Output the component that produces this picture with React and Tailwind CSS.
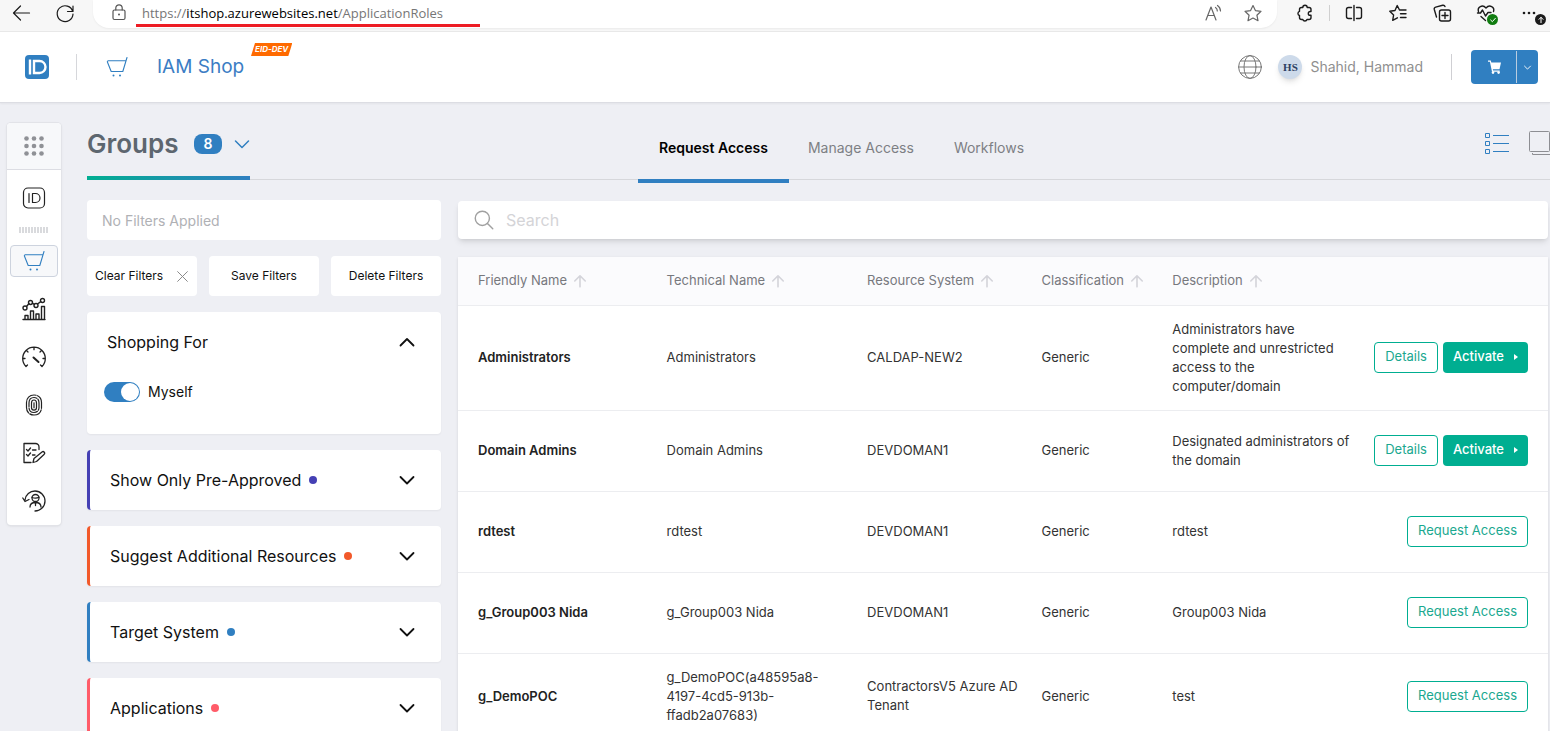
import React from 'react';

const FILTERS = [
  { title: 'Show Only Pre-Approved', border: 'border-[#4540b4]', dot: 'bg-[#4540b4]' },
  { title: 'Suggest Additional Resources', border: 'border-[#f2592a]', dot: 'bg-[#f2592a]' },
  { title: 'Target System', border: 'border-[#307fc1]', dot: 'bg-[#307fc1]' },
  { title: 'Applications', border: 'border-[#ff5c69]', dot: 'bg-[#ff5c69]' },
];

const COLUMNS = [
  { label: 'Friendly Name', width: 'w-[17.3%]' },
  { label: 'Technical Name', width: 'w-[18.4%]' },
  { label: 'Resource System', width: 'w-[16%]' },
  { label: 'Classification', width: 'w-[12%]' },
  { label: 'Description', width: 'w-[18.6%]' },
];

const ROWS = [
  {
    name: 'Administrators',
    technical: 'Administrators',
    system: 'CALDAP-NEW2',
    classification: 'Generic',
    description: 'Administrators have complete and unrestricted access to the computer/domain',
    active: true,
  },
  {
    name: 'Domain Admins',
    technical: 'Domain Admins',
    system: 'DEVDOMAN1',
    classification: 'Generic',
    description: 'Designated administrators of the domain',
    active: true,
  },
  { name: 'rdtest', technical: 'rdtest', system: 'DEVDOMAN1', classification: 'Generic', description: 'rdtest' },
  {
    name: 'g_Group003 Nida',
    technical: 'g_Group003 Nida',
    system: 'DEVDOMAN1',
    classification: 'Generic',
    description: 'Group003 Nida',
  },
  {
    name: 'g_DemoPOC',
    technical: 'g_DemoPOC(a48595a8-4197-4cd5-913b-ffadb2a07683)',
    system: 'ContractorsV5 Azure AD Tenant',
    classification: 'Generic',
    description: 'test',
  },
];

function Svg({ size = 24, className = '', sw = 1.2, children }) {
  return (
    <svg
      width={size}
      height={size}
      viewBox="0 0 24 24"
      fill="none"
      stroke="currentColor"
      strokeWidth={sw}
      strokeLinecap="round"
      strokeLinejoin="round"
      className={`shrink-0 ${className}`}
      aria-hidden="true"
    >
      {children}
    </svg>
  );
}

function Chevron({ className = '', up = false, size = 24, sw = 1.8 }) {
  return (
    <Svg size={size} sw={sw} className={className}>
      <path d={up ? 'M5.5 15.5 12 9l6.5 6.5' : 'M5.5 9 12 15.5 18.5 9'} />
    </Svg>
  );
}

function CartOutline({ className = '' }) {
  return (
    <Svg className={className} sw={1.1}>
      <path d="M22 2.5 17.8 16.5H6.2L2.300 6.800 3 5.800h17.800M22 2.500" />
      <circle cx="8.500" cy="20.500" r="1" fill="currentColor" stroke="none" />
      <circle cx="15" cy="20.500" r="1" fill="currentColor" stroke="none" />
    </Svg>
  );
}

function BrowserBar() {
  return (
    <div className="flex h-8 shrink-0 items-start overflow-hidden border-b border-[#e8e8e8] bg-[#f7f7f7] text-[#1b1b1b]">
      <div className="flex h-[26px] w-[93px] shrink-0 items-center gap-5 pl-[9px]">
        <button type="button" aria-label="Back">
          <Svg>
            <path d="M20.500 12h-16M11.500 5l-7 7 7 7" />
          </Svg>
        </button>
        <button type="button" aria-label="Refresh">
          <Svg>
            <path d="M19.700 10.500A7.900 7.900 0 1 0 20 13M20 5v5.500h-5.500" />
          </Svg>
        </button>
      </div>
      <div className="flex h-7 min-w-0 flex-1 items-start rounded-b-2xl bg-white pl-3.5 pr-3 shadow-xs">
        <Svg className="mt-px text-[#555]">
          <rect x="6" y="9" width="12" height="9.500" rx="1.500" />
          <path d="M8.800 9V7a3.200 3.200 0 0 1 6.400 0v2" />
          <circle cx="12" cy="13.500" r="1" fill="currentColor" stroke="none" />
        </Svg>
        <div
          role="textbox"
          aria-label="Address"
          className="ml-[5px] h-[27px] w-[344px] whitespace-nowrap border-b-3 border-[#ed1c24] pl-1.5 pt-[3px] font-['Open_Sans',sans-serif] text-[13px] leading-5 text-[#767676]"
        >
          https://<span className="text-black">itshop.azurewebsites.net</span>/ApplicationRoles
        </div>
        <button type="button" aria-label="Read aloud" className="ml-auto mt-px text-[#666]">
          <Svg>
            <path d="m5 19 5-13 5 13M6.800 14.500h6.400M14.500 6.500a4 4 0 0 1 1.800 3.500M16.500 4.500A7 7 0 0 1 19.500 10" />
          </Svg>
        </button>
        <button type="button" aria-label="Add to favorites" className="ml-4 mt-px text-[#666]">
          <Svg>
            <path d="m12 4.500 2.400 5.100 5.600.7-4.100 3.900 1.100 5.500-5-2.700-5 2.700 1.100-5.500L4 10.300l5.600-.7z" />
          </Svg>
        </button>
      </div>
      <div className="flex h-[26px] shrink-0 items-center pl-4 pr-2">
        <button type="button" aria-label="Extensions">
          <Svg sw={1.4}>
            <path d="M8.500 6.500h1.300a2.200 2.200 0 0 1 4.400 0H16a2 2 0 0 1 2 2v2h-.8a1.900 1.900 0 0 0 0 3.800h.8v2.200a2 2 0 0 1-2 2h-2a2.200 2.200 0 0 1-4.200 0H8.500a2 2 0 0 1-2-2v-2a2.200 2.200 0 0 1 0-4.200v-1.800a2 2 0 0 1 2-2z" />
          </Svg>
        </button>
        <span className="ml-3 h-4 w-px bg-[#d0d0d0]" />
        <button type="button" aria-label="Split screen" className="ml-3">
          <Svg sw={1.4}>
            <path d="M9.500 6.500h-3a2 2 0 0 0-2 2v7a2 2 0 0 0 2 2h3M14.500 6.500h3a2 2 0 0 1 2 2v7a2 2 0 0 1-2 2h-3M12 4.500v15" />
          </Svg>
        </button>
        <button type="button" aria-label="Favorites" className="ml-5">
          <Svg sw={1.4}>
            <path d="m13.500 9-2.300-4.500L9 9.500l-5.200.8 3.800 3.700-.9 5.300 4.700-2.500M13.500 9H20M14.500 12.800H20M14.500 16.500H20" />
          </Svg>
        </button>
        <button type="button" aria-label="Collections" className="ml-5">
          <Svg sw={1.4}>
            <rect x="9.500" y="9" width="11" height="11" rx="2" />
            <path d="M15 11.500v6M12 14.500h6M6.500 16 4.300 8.500a2 2 0 0 1 1.400-2.400l7-1.800a2 2 0 0 1 2.300 1.300" />
          </Svg>
        </button>
        <button type="button" aria-label="Browser essentials" className="relative ml-5">
          <Svg sw={1.4}>
            <path d="M4.500 10.500C3 6 8.500 3 12 7c3.500-4 9-1 7.500 3.500M3.500 12h3l2-3 3 6 2.500-3.500h3M7 15.500l4.500 4" />
          </Svg>
          <span className="absolute bottom-0 right-0 flex size-[11px] items-center justify-center rounded-full bg-[#107c10] text-white">
            <Svg size={8} sw={3}>
              <path d="m5 12 5 5 9-10" />
            </Svg>
          </span>
        </button>
        <button type="button" aria-label="Settings and more" className="relative ml-5">
          <Svg>
            <g fill="currentColor" stroke="none">
              <circle cx="6" cy="12" r="1.300" />
              <circle cx="11" cy="12" r="1.300" />
              <circle cx="16" cy="12" r="1.300" />
            </g>
          </Svg>
          <span className="absolute -right-1 bottom-0 flex size-[11px] items-center justify-center rounded-full bg-[#1b1b1b] text-white">
            <Svg size={8} sw={3}>
              <path d="M12 20V4M6 10l6-6 6 6" />
            </Svg>
          </span>
        </button>
      </div>
    </div>
  );
}

function Header() {
  return (
    <header className="flex h-[71px] shrink-0 items-center border-b border-[#dcdde3] bg-white pl-[25px] pr-3 shadow-xs">
      <a href="#home" aria-label="Home">
        <svg width="24" height="24" viewBox="0 0 24 24" fill="none" stroke="#fff" strokeWidth="2.400">
          <rect width="24" height="24" rx="4" fill="#307fc1" stroke="none" />
          <path d="M5 4.500v15M9 6h5.500a6 6 0 0 1 0 12H9z" />
        </svg>
      </a>
      <span className="ml-[27px] h-[26px] w-px bg-[#d6d7db]" />
      <CartOutline className="ml-7 text-[#307fc1]" />
      <div className="relative ml-7">
        <h1 className="text-[19px] leading-6 text-[#3b7dc4]">IAM Shop</h1>
        <span className="absolute -top-3 left-[94px] whitespace-nowrap bg-[#ff6a00] px-1 text-[8px] font-bold italic leading-[13px] text-white [clip-path:polygon(4px_0,100%_0,calc(100%-4px)_100%,0_100%)]">
          EID-DEV
        </span>
      </div>
      <button type="button" aria-label="Language" className="ml-auto text-[#777]">
        <Svg sw={1}>
          <circle cx="12" cy="12" r="11.400" />
          <ellipse cx="12" cy="12" rx="6" ry="11.400" />
          <path d="M.6 12h22.800M2.500 6h19M2.500 18h19" />
        </Svg>
      </button>
      <span className="ml-4 flex size-6 items-center justify-center rounded-full bg-[#cddaea] font-['Liberation_Serif',serif] text-[11px] font-bold text-[#2c3f63] shadow-md">
        HS
      </span>
      <span className="ml-2 text-sm text-[#8f8f8f]">Shahid, Hammad</span>
      <span className="ml-7 h-[26px] w-px bg-[#cfcfd3]" />
      <div className="ml-[19px] flex h-[34px] overflow-hidden rounded bg-[#307fc1] py-px text-white">
        <button type="button" aria-label="Cart" className="flex w-[45px] items-center justify-center pl-0.5">
          <svg width="16" height="16" viewBox="0 0 16 16" fill="currentColor" aria-hidden="true">
            <path d="M1 1.500h2.800l.5 2H14l-1.500 6.700H5.800l.3 1.300h6.600v1.200H5L2.900 2.800H1z" />
            <circle cx="6" cy="13.600" r="1.300" />
            <circle cx="11.600" cy="13.600" r="1.300" />
          </svg>
        </button>
        <button
          type="button"
          aria-label="Cart options"
          className="flex w-[22px] items-center justify-center border-l border-[#b9cde0]"
        >
          <Chevron size={11} sw={2} />
        </button>
      </div>
    </header>
  );
}

function Sidebar() {
  return (
    <nav
      aria-label="Modules"
      className="mx-[7px] mt-5 flex w-[54px] shrink-0 flex-col items-center self-start rounded bg-white pb-3 text-[#222] shadow-sm ring-1 ring-[#e2e3e8]"
    >
      <button
        type="button"
        aria-label="All apps"
        className="flex h-[47px] w-full items-center justify-center rounded-t border-b border-[#dcdde3] bg-[#f7f8fa] text-[#8f9196]"
      >
        <Svg>
          <g fill="currentColor" stroke="none">
            {[4.5, 12, 19.5].map((y) =>
              [4.5, 12, 19.5].map((x) => <circle key={`${x}-${y}`} cx={x} cy={y} r="2.300" />)
            )}
          </g>
        </Svg>
      </button>
      <button type="button" aria-label="Identity" className="mt-4">
        <Svg>
          <rect x="1.500" y="2" width="21" height="20" rx="4.500" />
          <path d="M7 7.500v9M10.500 7.500h3a4.500 4.500 0 0 1 0 9h-3z" />
        </Svg>
      </button>
      <span className="mt-[17px] h-1.5 w-[30px] bg-[repeating-linear-gradient(90deg,#d9dadd_0_2px,transparent_2px_3px)]" />
      <button
        type="button"
        aria-label="Shop"
        className="mt-3 flex h-8 w-12 items-center justify-center rounded-sm border border-[#cdd3de] bg-[#f7f8fa] text-[#307fc1]"
      >
        <CartOutline />
      </button>
      <button type="button" aria-label="Analytics" className="mt-5">
        <Svg sw={1.4}>
          <path d="M1 22.500h22M3 22v-3.500h3V22M8.500 22v-8h3v8M14 22v-5h3v5M19.500 22V9.500h3V22M4.500 9.500l2.500-3M10.300 6.200l2.200 1.300M15.800 6.800l3-2.200" />
          <circle cx="3" cy="11" r="2" />
          <circle cx="8.500" cy="5.500" r="2" />
          <circle cx="14" cy="8.500" r="2" />
          <circle cx="20.500" cy="3.500" r="2" />
        </Svg>
      </button>
      <button type="button" aria-label="Dashboard" className="mt-6">
        <Svg sw={1.3}>
          <path d="M4 21.500a11.300 11.300 0 1 1 16 0M4 21.500l1.500-1.500M20 21.500 18.500 20M.8 13.500H3M21 13.500h2.200M12 2.200v2.500M4.500 5.500 6 7M19.500 5.500 18 7" />
          <path d="m11.500 12.500 5 4.500" strokeWidth="2" />
        </Svg>
      </button>
      <button type="button" aria-label="Biometrics" className="mt-6">
        <Svg sw={1.2}>
          <path d="M4.500 9.500C4.500 5 7.500 2 12 2s7.500 3 7.500 7.500v5c0 4.500-3 7.500-7.500 7.500s-7.500-3-7.500-7.500z" strokeDasharray="14 1.500" />
          <path d="M7 10c0-3.500 2-5.500 5-5.500s5 2 5 5.500v4.500c0 3-2 5-5 5s-5-2-5-5z" strokeDasharray="11 1.500" />
          <path d="M9.500 10c0-2 1-3 2.500-3s2.500 1 2.500 3v4.500c0 1.700-1 2.700-2.500 2.700s-2.500-1-2.500-2.700z" />
          <path d="M12 9.800v5" />
        </Svg>
      </button>
      <button type="button" aria-label="Reviews" className="mt-6">
        <Svg sw={1.3}>
          <path d="M9 21.500H2V2.500h11.500a3.500 3.500 0 0 1 3.500 3.500v2.500M4.500 8.500 6 10l2.500-3M4.500 13.500 6 15l2.500-3M10.500 9H14M10.500 14h2.500M11 21.500l1-4 8-6.500a1.600 1.600 0 0 1 2 2.500l-7.500 7z" />
        </Svg>
      </button>
      <button type="button" aria-label="Delegation" className="mt-6">
        <Svg sw={1.3}>
          <path d="M3 11C3.500 5.500 8 2 13 2a10 10 0 1 1 0 20M.8 9 3 12.500 7 10.500" />
          <circle cx="13.500" cy="9" r="3.500" />
          <path d="M10 8.500c2.500.8 5 .8 7-.3M8 18c0-3 2-4.500 5.500-4.500S19 15 19 18M13.500 14v2.500" />
        </Svg>
      </button>
    </nav>
  );
}

function PageTabs() {
  return (
    <div className="flex h-[77px] shrink-0 border-b border-[#d6d7db]">
      <div className="w-[551px] shrink-0">
        <div className="flex h-[77px] w-[163px] items-center border-b-4 pt-2 [border-image:linear-gradient(90deg,#00ae91,#307fc1)_1]">
          <h2 className="text-[26px] font-semibold leading-8 text-[#5d666f]">Groups</h2>
          <span className="ml-auto flex h-5 w-7 items-center justify-center rounded-lg bg-[#307fc1] text-sm font-semibold text-white">
            8
          </span>
          <button type="button" aria-label="Switch resource type" className="-mr-1 ml-2 text-[#307fc1]">
            <Chevron sw={1.5} />
          </button>
        </div>
      </div>
      <div role="tablist" className="-mb-1 flex text-sm text-[#7d7f84]">
        <button
          type="button"
          role="tab"
          aria-selected="true"
          className="border-b-4 border-[#307fc1] px-[21px] pt-3.5 font-semibold text-black"
        >
          Request Access
        </button>
        <button type="button" role="tab" aria-selected="false" className="border-b-4 border-transparent px-[19px] pt-3.5">
          Manage Access
        </button>
        <button type="button" role="tab" aria-selected="false" className="border-b-4 border-transparent px-[21px] pt-3.5">
          Workflows
        </button>
      </div>
      <div className="-mr-1 ml-auto flex items-center gap-5 pt-1">
        <button type="button" aria-label="List view" className="text-[#307fc1]">
          <svg width="24" height="22" viewBox="0 0 24 22" fill="none" stroke="currentColor" aria-hidden="true">
            <path d="M.5 1.500h4v4h-4zM.5 9.500h4v4h-4zM.5 17.500h4v4h-4zM8 3.500h16M8 11.500h16M8 19.500h16" />
          </svg>
        </button>
        <button type="button" aria-label="Card view" className="text-[#8d8e93]">
          <svg width="25" height="24" viewBox="0 0 25 24" fill="none" stroke="currentColor" aria-hidden="true">
            <rect x=".5" y=".5" width="20" height="20" rx="1" />
            <path d="M3.500 22v1.500H24V3" />
          </svg>
        </button>
      </div>
    </div>
  );
}

function FilterPanel() {
  return (
    <aside className="flex w-[354px] shrink-0 flex-col gap-4 text-[#111]">
      <input
        type="text"
        aria-label="Applied filters"
        placeholder="No Filters Applied"
        className="h-10 rounded bg-white px-[15px] text-sm outline-none placeholder:text-[#b0b1b5]"
      />
      <div className="grid grid-cols-3 gap-3 text-xs">
        <button type="button" className="flex h-10 items-center justify-between rounded bg-white px-2">
          Clear Filters
          <Svg size={13} className="text-[#888]" sw={1.8}>
            <path d="m3 3 18 18M21 3 3 21" />
          </Svg>
        </button>
        <button type="button" className="h-10 rounded bg-white">
          Save Filters
        </button>
        <button type="button" className="h-10 rounded bg-white">
          Delete Filters
        </button>
      </div>
      <section className="rounded bg-white pb-8 shadow-xs">
        <button
          type="button"
          aria-expanded="true"
          className="flex h-15 w-full items-center justify-between pl-5 pr-[22px] text-base"
        >
          Shopping For
          <Chevron up />
        </button>
        <label className="ml-[17px] mt-2.5 flex items-center gap-2 text-sm">
          <input
            type="checkbox"
            defaultChecked
            className="flex h-5 w-9 appearance-none items-center justify-end rounded-full bg-[#307fc1] px-px before:size-[18px] before:rounded-full before:bg-white"
          />
          Myself
        </label>
      </section>
      {FILTERS.map((f) => (
        <section key={f.title} className={`shrink-0 rounded border-l-3 bg-white shadow-xs ${f.border}`}>
          <button
            type="button"
            aria-expanded="false"
            className="flex h-15 w-full items-center pl-5 pr-[22px] text-base"
          >
            {f.title}
            <span className={`ml-2 size-2 rounded-full ${f.dot}`} />
            <Chevron className="ml-auto" />
          </button>
        </section>
      ))}
    </aside>
  );
}

function RowActions({ active }) {
  const outline =
    'h-[31px] rounded border border-[#00ae91] bg-white px-2.5 pb-0.5 text-[#1aa88f] whitespace-nowrap';
  if (!active) {
    return (
      <button type="button" className={outline}>
        Request Access
      </button>
    );
  }
  return (
    <>
      <button type="button" className={outline}>
        Details
      </button>
      <button
        type="button"
        className="flex h-[31px] items-center rounded bg-[#00ae91] px-2.5 pb-0.5 font-medium text-white"
      >
        Activate
        <svg width="4" height="6" viewBox="0 0 4 6" fill="currentColor" className="ml-2.5" aria-hidden="true">
          <path d="M0 0l4 3-4 3z" />
        </svg>
      </button>
    </>
  );
}

function ResourceTable() {
  return (
    <div className="min-w-0 flex-1">
      <label className="mt-px flex h-[38px] items-center rounded bg-white pl-4 shadow-md">
        <Svg size={20} className="text-[#a0a0a0]" sw={1.7}>
          <circle cx="10" cy="10" r="8.500" />
          <path d="m16.500 16.500 6 6" />
        </Svg>
        <input
          type="search"
          aria-label="Search"
          placeholder="Search"
          className="ml-3 flex-1 bg-transparent text-base outline-none placeholder:text-[#d4d4d7]"
        />
      </label>
      <table className="mt-[18px] w-full table-fixed bg-white text-[13px] leading-[19px] text-[#333] shadow-sm">
        <thead className="bg-[#fbfbfd] text-[#77787d]">
          <tr className="h-12 border-b border-[#ecedf0]">
            {COLUMNS.map((c) => (
              <th key={c.label} scope="col" className={`pl-5 text-left font-normal ${c.width}`}>
                <button type="button" className="flex items-center gap-1.5 whitespace-nowrap">
                  {c.label}
                  <Svg size={14} className="text-[#d4d4da]" sw={2.8}>
                    <path d="M12 22V3M3 12l9-9 9 9" />
                  </Svg>
                </button>
              </th>
            ))}
            <th scope="col" aria-label="Actions" />
          </tr>
        </thead>
        <tbody>
          {ROWS.map((r) => (
            <tr key={r.name} className="h-[81px] border-b border-[#ecedf0]">
              <th scope="row" className="py-3.5 pl-5 text-left font-semibold text-[#222]">
                {r.name}
              </th>
              <td className="py-3.5 pl-5 pr-5">{r.technical}</td>
              <td className="py-3.5 pl-5">{r.system}</td>
              <td className="py-3.5 pl-5">{r.classification}</td>
              <td className="py-3.5 pl-5">{r.description}</td>
              <td className="py-6 pr-5">
                <div className="flex justify-end gap-[5px]">
                  <RowActions active={r.active} />
                </div>
              </td>
            </tr>
          ))}
        </tbody>
      </table>
    </div>
  );
}

export default function App() {
  return (
    <div className="flex h-screen flex-col overflow-hidden bg-[#eeeff4] font-[Inter,sans-serif]">
      <BrowserBar />
      <Header />
      <div className="flex min-h-0 flex-1">
        <Sidebar />
        <main className="ml-[19px] flex min-w-0 flex-1 flex-col">
          <PageTabs />
          <div className="flex gap-[17px] pr-0.5 pt-5">
            <FilterPanel />
            <ResourceTable />
          </div>
        </main>
      </div>
    </div>
  );
}
